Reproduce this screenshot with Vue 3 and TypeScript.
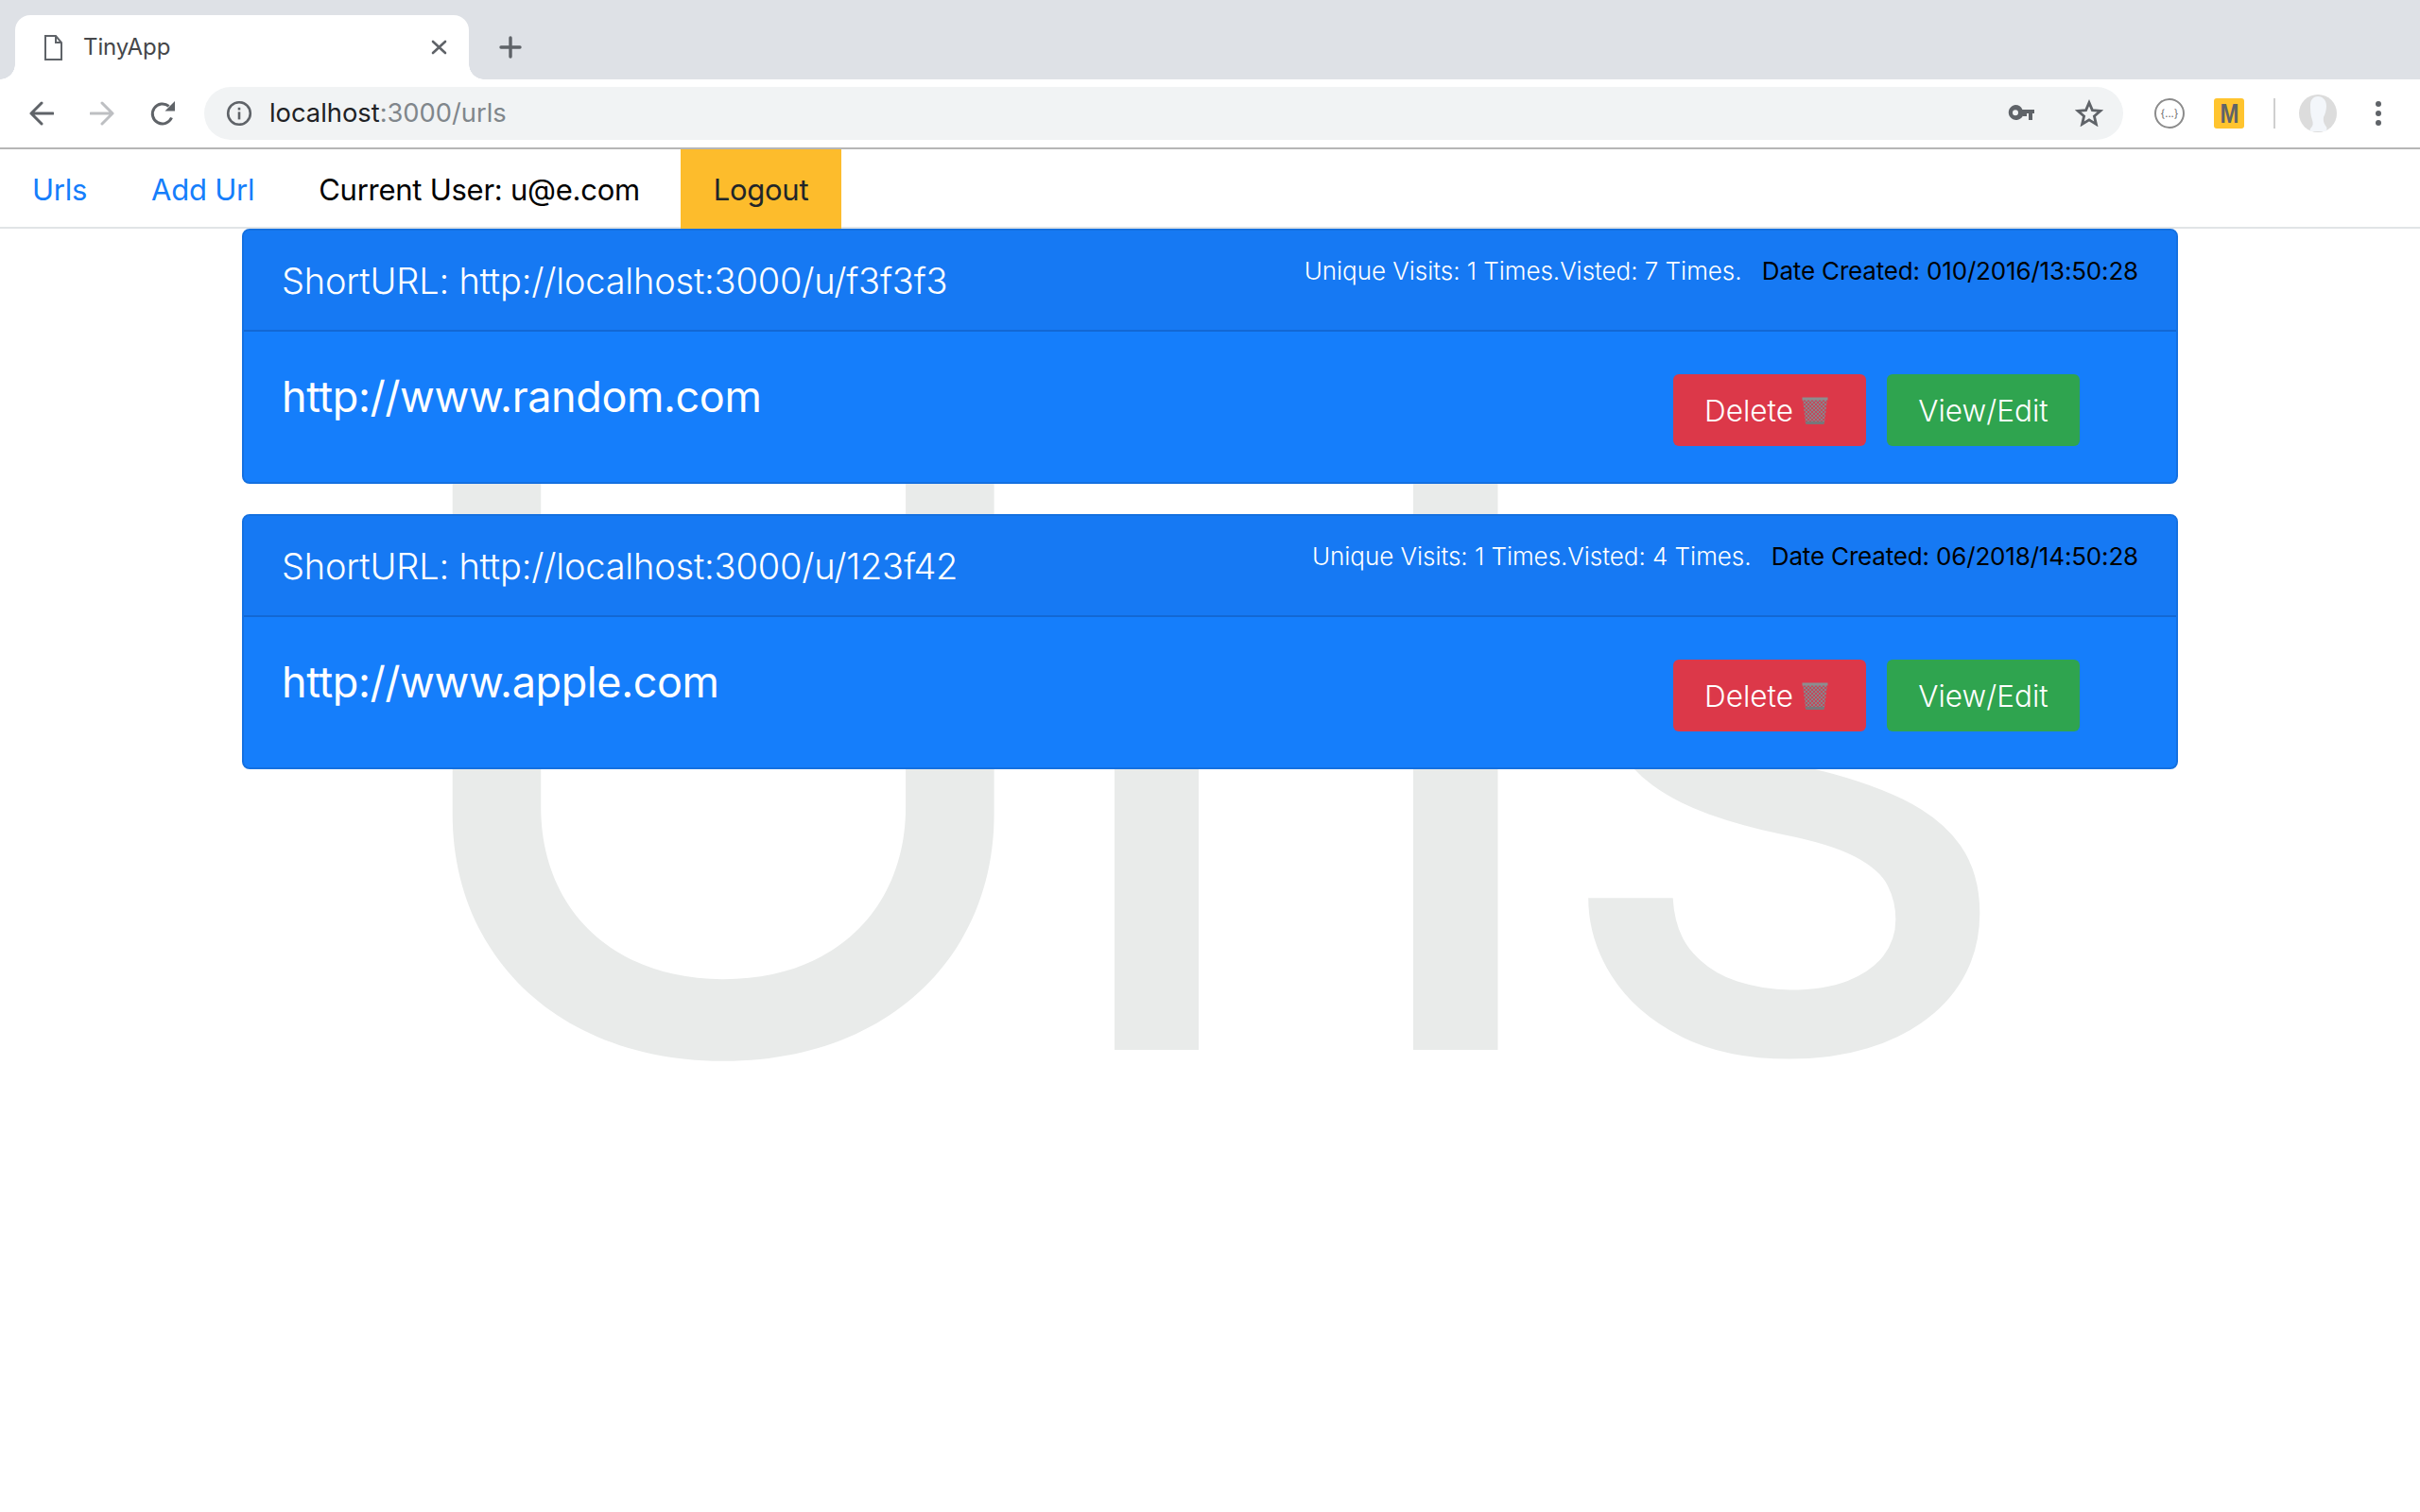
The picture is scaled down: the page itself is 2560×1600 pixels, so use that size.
<script setup lang="ts">
type UrlCard = {
  short: string
  long: string
  unique: number
  visits: number
  created: string
}

const cards: UrlCard[] = [
  { short: 'f3f3f3', long: 'http://www.random.com', unique: 1, visits: 7, created: '010/2016/13:50:28' },
  { short: '123f42', long: 'http://www.apple.com', unique: 1, visits: 4, created: '06/2018/14:50:28' },
]
</script>

<template>
  <div class="browser">
    <div class="tabstrip">
      <div class="tab">
        <svg class="doc-icon" width="19" height="27" viewBox="0 0 19 27" fill="none" stroke="#5f6368" stroke-width="2">
          <path d="M1 1h11l6 7v18H1z" />
          <path d="M12 1v7h6" />
        </svg>
        <span class="tab-title">TinyApp</span>
        <svg class="tab-close" width="17" height="16" viewBox="0 0 17 16" stroke="#5f6368" stroke-width="2.6" stroke-linecap="round">
          <path d="M2 2l13 12M15 2L2 14" />
        </svg>
      </div>
      <svg class="new-tab" width="24" height="24" viewBox="0 0 24 24" stroke="#5f6368" stroke-width="3.4" stroke-linecap="round">
        <path d="M12 2v20M2 12h20" />
      </svg>
    </div>

    <div class="toolbar">
      <svg class="nav-icon" width="26" height="26" viewBox="0 0 26 26" fill="none" stroke="#5f6368" stroke-width="3" stroke-linecap="round" stroke-linejoin="round">
        <path d="M25 13H2M13 2L2 13l11 11" />
      </svg>
      <svg class="nav-icon forward" width="26" height="26" viewBox="0 0 26 26" fill="none" stroke="#bdbfc2" stroke-width="3" stroke-linecap="round" stroke-linejoin="round">
        <path d="M1 13h23M13 2l11 11-11 11" />
      </svg>
      <svg class="nav-icon reload" width="28" height="28" viewBox="0 0 28 28" fill="none">
        <path d="M23.5 18.5A10.5 10.5 0 1 1 20.6 6.4" stroke="#5f6368" stroke-width="3" />
        <path d="M16.5 11.5H27V1z" fill="#5f6368" />
      </svg>

      <div class="omnibox">
        <svg class="info-icon" width="28" height="28" viewBox="0 0 28 28" fill="none">
          <circle cx="14" cy="14" r="11.8" stroke="#5f6368" stroke-width="2.6" />
          <rect x="12.7" y="12.4" width="2.6" height="8" fill="#5f6368" />
          <rect x="12.7" y="7.8" width="2.6" height="2.7" fill="#5f6368" />
        </svg>
        <span class="url"><span class="host">localhost</span>:3000/urls</span>
        <svg class="key-icon" width="28" height="18" viewBox="0 0 28 18">
          <path fill-rule="evenodd" d="M8 0a8 8 0 0 1 7.4 5H28v4h-2v7h-4V9h-2v3h-4V11.4A8 8 0 1 1 8 0zm0 5.200a3 3 0 1 0 0 6 3 3 0 0 0 0-6z" fill="#5f6368" />
        </svg>
        <svg class="star-icon" width="30" height="29" viewBox="0 0 30 29" fill="none">
          <path d="M15 3.600l3.400 8 8.600.7-6.600 5.600 2 8.500-7.400-4.500-7.400 4.500 2-8.500L3 12.300l8.600-.7z" stroke="#5f6368" stroke-width="2.8" />
        </svg>
      </div>

      <div class="ext-icon">
        <span>{...}</span>
      </div>
      <div class="m-icon"><span>M</span></div>
      <div class="tool-sep"></div>
      <svg class="avatar" width="40" height="40" viewBox="0 0 40 40">
        <circle cx="20" cy="20" r="20" fill="#dcdcdc" />
        <path d="M12 11c0-6 4-9 8-9s9 3 9 10c0 5-1.500 9-3 12-.5 3 0 6 2 9 2 2 2 4 0 6H12c-1-2 0-3 1-4 2-2 2-5 1-8-2-5-2-11-2-16z" fill="#f3f6fa" />
      </svg>
      <svg class="menu-icon" width="6" height="26" viewBox="0 0 6 26" fill="#5f6368">
        <circle cx="3" cy="3" r="3" />
        <circle cx="3" cy="13" r="3" />
        <circle cx="3" cy="23" r="3" />
      </svg>
    </div>
  </div>

  <nav class="site-nav">
    <a class="nav-link" href="#">Urls</a>
    <a class="nav-link" href="#">Add Url</a>
    <span class="nav-user">Current User: u@e.com</span>
    <button class="logout" type="button">Logout</button>
  </nav>

  <main class="page">
    <div class="watermark"><span class="wm-cap">U</span><span class="wm-rest">rls</span></div>

    <div class="card-list">
      <article v-for="card in cards" :key="card.short" class="url-card">
        <header class="card-head">
          <span class="short-url">ShortURL: http://localhost:3000/u/{{ card.short }}</span>
          <span class="stats">
            Unique Visits: {{ card.unique }} Times.Visted: {{ card.visits }} Times.
            <span class="created">Date Created: {{ card.created }}</span>
          </span>
        </header>
        <div class="card-body">
          <h3 class="long-url">{{ card.long }}</h3>
          <div class="actions">
            <button class="btn btn-delete" type="button">
              Delete
              <svg class="trash" width="30" height="32" viewBox="0 0 30 32">
                <defs>
                  <pattern id="mesh" width="4" height="4" patternUnits="userSpaceOnUse">
                    <rect width="4" height="4" fill="#c04a5c" />
                    <path d="M0 0l4 4M4 0L0 4" stroke="#8b8489" stroke-width="1" />
                  </pattern>
                </defs>
                <path d="M2 4h26l-3 26H5z" fill="url(#mesh)" />
                <path d="M1.500 2.500h27v3h-27z" fill="#8d8d8f" />
                <path d="M5 28h20l-.5 3h-19z" fill="#77777a" />
              </svg>
            </button>
            <button class="btn btn-view" type="button">View/Edit</button>
          </div>
        </div>
      </article>
    </div>
  </main>
</template>

<style>
html,
body {
  margin: 0;
  background: #fff;
}
</style>

<style scoped>
.browser {
  font-family: Inter, "Liberation Sans", sans-serif;
}

.tabstrip {
  display: flex;
  align-items: flex-end;
  height: 84px;
  padding-left: 16px;
  box-sizing: border-box;
  background: #dee1e6;
}

.tab {
  position: relative;
  display: flex;
  align-items: center;
  width: 480px;
  height: 68px;
  padding: 0 23px 0 31px;
  box-sizing: border-box;
  border-radius: 16px 16px 0 0;
  background: #fff;
}

.tab::before,
.tab::after {
  content: "";
  position: absolute;
  bottom: 0;
  width: 16px;
  height: 16px;
}

.tab::before {
  left: -16px;
  background: radial-gradient(circle at 0 0, transparent 15.5px, #fff 16px);
}

.tab::after {
  right: -16px;
  background: radial-gradient(circle at 100% 0, transparent 15.5px, #fff 16px);
}

.tab-title {
  flex: 1;
  margin-left: 22px;
  margin-bottom: 2px;
  font-size: 24px;
  letter-spacing: -0.1px;
  color: #45474a;
}

.new-tab {
  margin: 0 0 22px 32px;
}

.toolbar {
  display: flex;
  align-items: center;
  height: 74px;
  padding: 0 41px 1px 31px;
  box-sizing: border-box;
  border-bottom: 2px solid #b6b6b6;
  background: #fff;
}

.nav-icon {
  flex: none;
}

.forward {
  margin-left: 38px;
}

.reload {
  margin-left: 37px;
}

.omnibox {
  display: flex;
  align-items: center;
  flex: 1;
  height: 56px;
  margin-left: 30px;
  padding: 0 21px 0 23px;
  border-radius: 28px;
  background: #f1f3f4;
}

.url {
  flex: 1;
  margin-left: 18px;
  font-size: 27.3px;
  color: #80868b;
}

.host {
  color: #202124;
}

.key-icon {
  margin-right: 43px;
}

.ext-icon {
  display: flex;
  align-items: center;
  justify-content: center;
  width: 32px;
  height: 32px;
  margin-left: 33px;
  box-sizing: border-box;
  border: 2px solid #8b8b8b;
  border-radius: 50%;
  font-size: 11px;
  color: #6a6a6a;
}

.m-icon {
  display: flex;
  align-items: center;
  justify-content: center;
  width: 32px;
  height: 32px;
  margin-left: 31px;
  border-radius: 3px;
  background: #ffc42e;
  font-family: "Liberation Sans", sans-serif;
  font-size: 30px;
  font-weight: 700;
  color: #5f6368;
}

.m-icon span {
  display: inline-block;
  transform: scaleX(0.8);
}

.tool-sep {
  width: 2px;
  height: 32px;
  margin-left: 31px;
  background: #cfcfcf;
}

.avatar {
  margin-left: 25px;
}

.menu-icon {
  margin-left: 41px;
}

.site-nav {
  display: flex;
  align-items: stretch;
  height: 84px;
  box-sizing: border-box;
  border-bottom: 2px solid #e1e4e6;
  font-family: Inter, "Liberation Sans", sans-serif;
  font-size: 31px;
  letter-spacing: -0.25px;
}

.nav-link,
.nav-user {
  display: flex;
  align-items: center;
  padding: 2px 34px 0;
  text-decoration: none;
  color: #157efb;
}

.nav-user {
  color: #000;
  padding-right: 43px;
}

.logout {
  height: 84px;
  padding: 0;
  width: 170px;
  border: 0;
  background: #fdbc2c;
  font: inherit;
  letter-spacing: inherit;
  color: #212529;
}

.page {
  position: relative;
  font-family: Inter, "Liberation Sans", sans-serif;
  min-height: 1358px;
}

.watermark {
  position: absolute;
  top: -102px;
  left: 0;
  right: 0;
  padding-right: 52px;
  text-align: center;
  font-family: Roboto, sans-serif;
  font-size: 985px;
  font-weight: 400;
  line-height: 1.2;
  color: #e9ebea;
}

.wm-cap {
  font-family: Inter, sans-serif;
  font-size: 1008px;
  letter-spacing: -29px;
}

.wm-rest {
  letter-spacing: -25px;
}

.card-list {
  position: relative;
  display: flex;
  flex-direction: column;
  gap: 32px;
  width: 2048px;
  margin: 0 auto;
}

.url-card {
  border: 2px solid #1470e0;
  border-radius: 8px;
  background: #157efb;
  overflow: hidden;
}

.card-head {
  display: flex;
  align-items: flex-start;
  justify-content: space-between;
  height: 105px;
  padding: 0 40px;
  border-bottom: 2px solid #1268d4;
  background: #1679f3;
  color: #fff;
}

.short-url {
  margin-top: 30px;
  font-size: 38px;
  font-weight: 300;
  letter-spacing: -0.2px;
}

.stats {
  margin-top: 27px;
  font-size: 26px;
  font-weight: 300;
  letter-spacing: -0.03px;
}

.created {
  margin-left: 14px;
  color: #000;
  font-weight: 400;
  letter-spacing: -0.17px;
}

.card-body {
  display: flex;
  justify-content: space-between;
  height: 159px;
  padding: 0 102px 0 40px;
}

.long-url {
  margin: 41px 0 0;
  font-size: 45px;
  font-weight: 400;
  letter-spacing: -0.4px;
  color: #fff;
}

.actions {
  display: flex;
  gap: 22px;
  margin-top: 45px;
}

.btn {
  display: flex;
  align-items: center;
  justify-content: center;
  gap: 8px;
  width: 204px;
  height: 76px;
  border: 0;
  border-radius: 6px;
  font: inherit;
  font-size: 31.5px;
  font-weight: 300;
  color: #fff;
}

.btn-delete {
  padding: 0 6px 0 0;
  background: #dc3849;
}

.btn-view {
  background: #2fa44f;
}
</style>
